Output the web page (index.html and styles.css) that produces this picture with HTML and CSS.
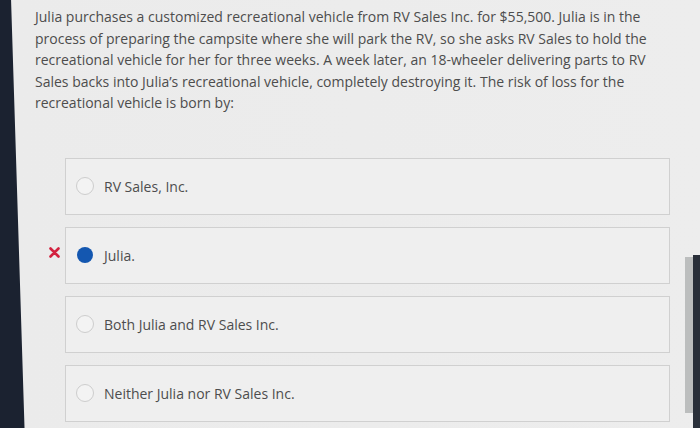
FILE: index.html
```html
<!DOCTYPE html>
<html lang="en">
<head>
    <meta charset="UTF-8">
    <meta name="viewport" content="width=device-width, initial-scale=1.0">
    <title>Question</title>
    <link rel="stylesheet" href="styles.css">
</head>
<body>

<div class="page">
    <p class="question">Julia purchases a customized recreational vehicle from RV Sales Inc. for $55,500. Julia is in the process of preparing the campsite where she will park the RV, so she asks RV Sales to hold the recreational vehicle for her for three weeks. A week later, an 18-wheeler delivering parts to RV Sales backs into Julia’s recreational vehicle, completely destroying it. The risk of loss for the recreational vehicle is born by:</p>

    <div class="options">
        <div class="option-row">
            <div class="mark"></div>
            <label class="option">
                <span class="radio"></span>
                <span class="option-text">RV Sales, Inc.</span>
            </label>
        </div>
        <div class="option-row">
            <div class="mark wrong">
                <svg width="11" height="11" viewBox="0 0 11 11">
                    <path d="M1.5 1.5 L9.5 9.5 M9.5 1.5 L1.5 9.5" stroke="#d3223f" stroke-width="2.6" stroke-linecap="round"/>
                </svg>
            </div>
            <label class="option">
                <span class="radio checked"></span>
                <span class="option-text">Julia.</span>
            </label>
        </div>
        <div class="option-row">
            <div class="mark"></div>
            <label class="option">
                <span class="radio"></span>
                <span class="option-text">Both Julia and RV Sales Inc.</span>
            </label>
        </div>
        <div class="option-row">
            <div class="mark"></div>
            <label class="option">
                <span class="radio"></span>
                <span class="option-text">Neither Julia nor RV Sales Inc.</span>
            </label>
        </div>
    </div>
</div>

<div class="scrollbar"><div class="thumb"></div></div>

</body>
</html>
```

FILE: styles.css
```css
html, body {
    height: 100%;
}
body {
    margin: 0;
    font-family: "Open Sans", Arial, sans-serif;
    color: #4d4d4d;
    background: linear-gradient(88.2deg, #1b2230 0, #1b2230 24px, #ebebeb 25px, #ededed 100%);
    overflow: hidden;
}
.page {
    padding: 6px 30px 0 35px;
}
.question {
    margin: 0;
    font-size: 14px;
    line-height: 21.5px;
    width: 620px;
}
.options {
    margin-top: 44px;
    display: flex;
    flex-direction: column;
    gap: 12px;
}
.option-row {
    display: flex;
}
.mark {
    width: 30px;
    display: flex;
    align-items: center;
    justify-content: flex-end;
    padding-right: 5px;
    box-sizing: border-box;
}
.mark.wrong {
    padding-bottom: 6px;
}
.option {
    flex: 1;
    height: 57px;
    display: flex;
    align-items: center;
    gap: 10px;
    padding-left: 10px;
    border: 1px solid #d0d0d0;
    background: #efefef;
    box-sizing: border-box;
    font-size: 14px;
}
.radio {
    width: 18px;
    height: 18px;
    border-radius: 50%;
    border: 1px solid #cdcdcd;
    background: #f3f3f3;
    box-sizing: border-box;
}
.radio.checked {
    width: 16px;
    height: 16px;
    margin: 0 1px;
    border: none;
    background: #1457b0;
}
.scrollbar {
    position: absolute;
    right: 0;
    top: 255px;
    bottom: 0;
    width: 15px;
    background: linear-gradient(to right, transparent 0, transparent 8px, #2a303a 8px);
}
.thumb {
    margin-top: 2px;
    width: 8px;
    height: 156px;
    background: #bcbebe;
}
```
